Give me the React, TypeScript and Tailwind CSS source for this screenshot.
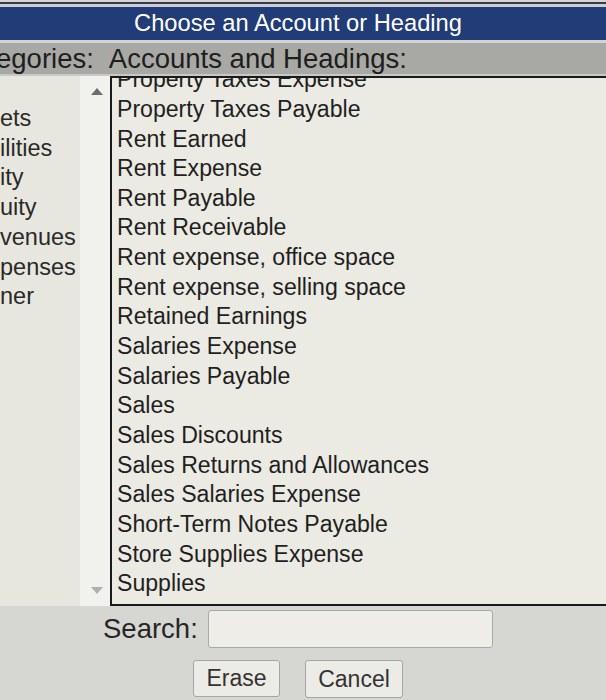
import React from "react";

const items = [
  "Property Taxes Expense",
  "Property Taxes Payable",
  "Rent Earned",
  "Rent Expense",
  "Rent Payable",
  "Rent Receivable",
  "Rent expense, office space",
  "Rent expense, selling space",
  "Retained Earnings",
  "Salaries Expense",
  "Salaries Payable",
  "Sales",
  "Sales Discounts",
  "Sales Returns and Allowances",
  "Sales Salaries Expense",
  "Short-Term Notes Payable",
  "Store Supplies Expense",
  "Supplies",
];

const cats = ["ets", "ilities", "ity", "uity", "venues", "penses", "ner"];

export default function App() {
  return (
    <div
      className="w-[606px] h-[700px] overflow-hidden bg-[#d6d6d2] text-[#222]"
      style={{ fontFamily: '"Liberation Sans", Arial, sans-serif' }}
    >
      <div className="h-[2px] bg-[#d4d5da]" />
      <div className="h-[2px] bg-[#3a3a3e]" />
      <div className="h-[3px] bg-[#c9ced8]" />
      <div className="h-[33px] bg-[#213c77] flex items-center justify-center text-white text-[23.7px] leading-none pr-[10px]">
        Choose an Account or Heading
      </div>
      <div className="h-[3px] bg-[#d2d3d3]" />
      <div className="h-[31px] bg-[#a8a8a4] flex items-center text-[27.5px] leading-none text-[#1e1e1e] whitespace-nowrap">
        <span className="ml-[-4px]">egories:</span>
        <span className="ml-[15px]">Accounts and Headings:</span>
      </div>
      <div className="h-[2px] bg-[#c8c8c4]" />
      <div className="flex h-[530px]">
        <div className="w-[80px] bg-[#e8e7df] pt-[28px] flex flex-col overflow-hidden">
          {cats.map((c) => (
            <div key={c} className="h-[29.7px] flex items-center text-[23.5px] leading-none text-[#2a2a2a] whitespace-nowrap">
              {c}
            </div>
          ))}
        </div>
        <div className="w-[30px] bg-[#f1f1ee] flex flex-col items-center justify-between pt-[12px] pb-[12px]">
          <svg width="12" height="7" viewBox="0 0 12 7" className="ml-[4px]">
            <polygon points="6,0 12,7 0,7" fill="#6e6e72" />
          </svg>
          <svg width="12" height="7" viewBox="0 0 12 7" className="ml-[4px]">
            <polygon points="0,0 12,0 6,7" fill="#b0b0b4" />
          </svg>
        </div>
        <div className="flex-1 border-l-2 border-t-2 border-b-2 border-[#1a1a1a] bg-[#ebeae3] overflow-hidden">
          <div className="mt-[-13px] pl-[5px] flex flex-col">
            {items.map((t) => (
              <div key={t} className="h-[29.65px] flex items-center text-[23.1px] leading-none text-[#1f1f1f] whitespace-nowrap">
                {t}
              </div>
            ))}
          </div>
        </div>
      </div>
      <div className="flex items-center pl-[103px] mt-[4px] h-[38px]">
        <span className="text-[27.5px] leading-none text-[#262626]">Search:</span>
        <div className="ml-[10px] w-[285px] h-[38px] border border-[#a9a9a9] rounded-[3px] bg-[#eeede8]" />
      </div>
      <div className="flex pl-[193px] mt-[12px] gap-[25px]">
        <div className="w-[87px] h-[37px] border border-[#a5a5a5] rounded-[3px] bg-[#ecebe6] flex items-center justify-center text-[23px] leading-none text-[#333]">
          Erase
        </div>
        <div className="w-[98px] h-[38px] border border-[#a5a5a5] rounded-[3px] bg-[#ecebe6] flex items-center justify-center text-[23px] leading-none text-[#333]">
          Cancel
        </div>
      </div>
    </div>
  );
}
